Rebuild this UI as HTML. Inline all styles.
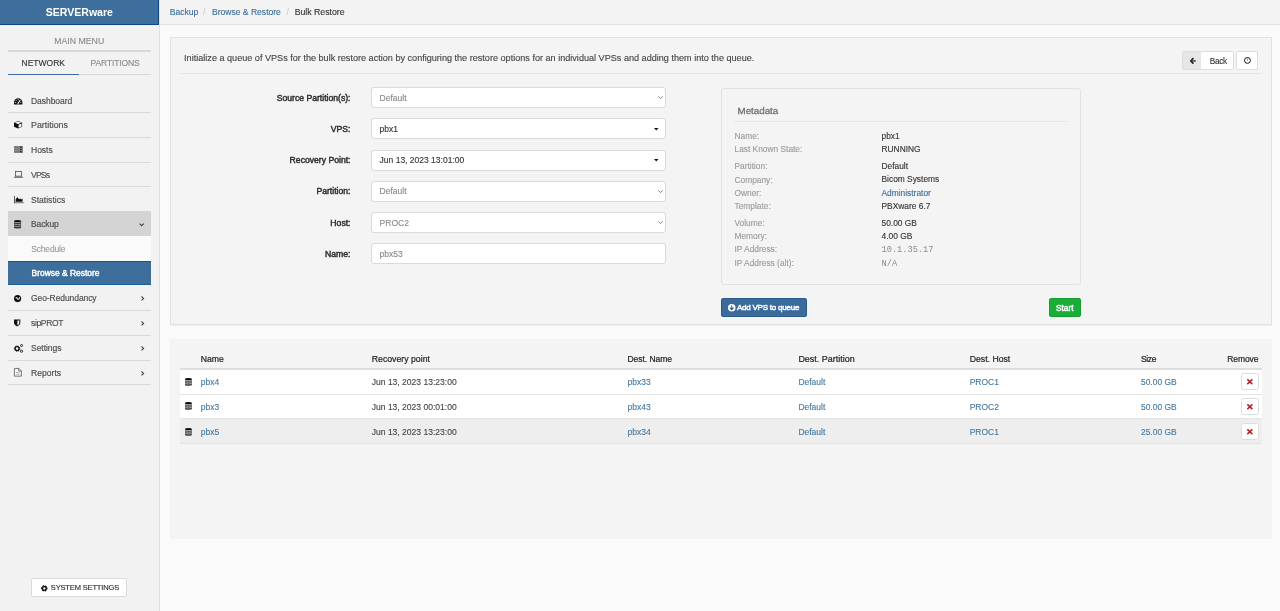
<!DOCTYPE html>
<html><head><meta charset="utf-8"><title>Bulk Restore</title>
<style>
html,body{margin:0;padding:0;}
body{width:1280px;height:611px;overflow:hidden;position:relative;background:#fafafa;font-family:"Liberation Sans",sans-serif;will-change:transform;}
.b{position:absolute;}
.t{position:absolute;line-height:0;white-space:nowrap;font-family:"Liberation Sans",sans-serif;}
</style></head><body>
<div class="b" style="left:0px;top:0px;width:159.00px;height:611.00px;background:#f2f2f2;"></div>
<div class="b" style="left:159px;top:0px;width:1.00px;height:611.00px;background:#e0e0e0;"></div>
<div class="b" style="left:0px;top:0px;width:159.00px;height:24.00px;background:#3e6e9b;"></div>
<div class="b" style="left:0px;top:24px;width:159.00px;height:1.00px;background:#0f4782;"></div>
<div class="b" style="left:158px;top:0px;width:1.00px;height:25.00px;background:#0f4782;"></div>
<div class="t" style="left:-220.7px;width:600px;text-align:center;top:12.34px;font-size:10.57px;color:#fff;font-weight:700;">SERVERware</div>
<div class="t" style="left:-220.8px;width:600px;text-align:center;top:40.57px;font-size:8.74px;color:#8a8a8a;-webkit-text-stroke:0.12px #8a8a8a;">MAIN MENU</div>
<div class="b" style="left:7.5px;top:50.3px;width:143.50px;height:1.50px;background:#d8d8d8;"></div>
<div class="t" style="left:21.5px;top:63.15px;font-size:8.51px;color:#333;-webkit-text-stroke:0.12px #333;">NETWORK</div>
<div class="t" style="left:90.6px;top:63.15px;font-size:8.5px;color:#8a8a8a;-webkit-text-stroke:0.12px #8a8a8a;letter-spacing:-0.125px;">PARTITIONS</div>
<div class="b" style="left:7.5px;top:73.5px;width:71.50px;height:1.70px;background:#3e6e9b;"></div>
<div class="b" style="left:79px;top:73.5px;width:72.00px;height:1.70px;background:#d8d8d8;"></div>
<div class="b" style="left:7.5px;top:112.0px;width:143.50px;height:1.00px;background:#d9d9d9;"></div>
<div class="b" style="left:7.5px;top:136.9px;width:143.50px;height:1.00px;background:#d9d9d9;"></div>
<div class="b" style="left:7.5px;top:161.5px;width:143.50px;height:1.00px;background:#d9d9d9;"></div>
<div class="b" style="left:7.5px;top:186.0px;width:143.50px;height:1.00px;background:#d9d9d9;"></div>
<div class="b" style="left:7.5px;top:310.0px;width:143.50px;height:1.00px;background:#d9d9d9;"></div>
<div class="b" style="left:7.5px;top:335.0px;width:143.50px;height:1.00px;background:#d9d9d9;"></div>
<div class="b" style="left:7.5px;top:359.7px;width:143.50px;height:1.00px;background:#d9d9d9;"></div>
<div class="b" style="left:7.5px;top:384.3px;width:143.50px;height:1.00px;background:#d9d9d9;"></div>
<div class="b" style="left:7.5px;top:211px;width:143.50px;height:25.00px;background:#d4d4d4;"></div>
<div class="b" style="left:7.5px;top:236px;width:143.50px;height:24.60px;background:#fafafa;"></div>
<div class="b" style="left:7.5px;top:260.6px;width:143.50px;height:24.00px;background:#3e6e9b;border-top:1px solid #0f5a98;border-bottom:1px solid #1d5f98;box-sizing:border-box;"></div>
<div class="t" style="left:31px;top:100.65px;font-size:8.5px;color:#4d4d4d;-webkit-text-stroke:0.15px #4d4d4d;letter-spacing:-0.042px;">Dashboard</div>
<div class="t" style="left:31px;top:125.32px;font-size:8.88px;color:#4d4d4d;-webkit-text-stroke:0.15px #4d4d4d;">Partitions</div>
<div class="t" style="left:31px;top:149.80px;font-size:8.51px;color:#4d4d4d;-webkit-text-stroke:0.15px #4d4d4d;">Hosts</div>
<div class="t" style="left:31px;top:174.80px;font-size:8.5px;color:#4d4d4d;-webkit-text-stroke:0.15px #4d4d4d;letter-spacing:-0.753px;">VPSs</div>
<div class="t" style="left:31px;top:199.78px;font-size:8.56px;color:#4d4d4d;-webkit-text-stroke:0.15px #4d4d4d;">Statistics</div>
<div class="t" style="left:31px;top:224.30px;font-size:8.5px;color:#4d4d4d;-webkit-text-stroke:0.15px #4d4d4d;letter-spacing:-0.12px;">Backup</div>
<div class="t" style="left:31px;top:298.30px;font-size:8.5px;color:#4d4d4d;-webkit-text-stroke:0.15px #4d4d4d;letter-spacing:-0.079px;">Geo-Redundancy</div>
<div class="t" style="left:31px;top:323.45px;font-size:8.5px;color:#4d4d4d;-webkit-text-stroke:0.15px #4d4d4d;letter-spacing:-0.346px;">sipPROT</div>
<div class="t" style="left:31px;top:348.05px;font-size:8.5px;color:#4d4d4d;-webkit-text-stroke:0.15px #4d4d4d;letter-spacing:-0.031px;">Settings</div>
<div class="t" style="left:31px;top:373.02px;font-size:8.6px;color:#4d4d4d;-webkit-text-stroke:0.15px #4d4d4d;">Reports</div>
<div class="t" style="left:31.3px;top:248.55px;font-size:8.5px;color:#9a9a9a;-webkit-text-stroke:0.12px #9a9a9a;letter-spacing:-0.192px;">Schedule</div>
<div class="t" style="left:31.5px;top:273.07px;font-size:8.45px;color:#fff;-webkit-text-stroke:0.4px #fff;">Browse &amp; Restore</div>
<div class="b" style="left:31.2px;top:578.2px;width:95.60px;height:18.60px;background:#fff;border:1px solid #dadada;border-radius:2px;box-sizing:border-box;"></div>
<div class="t" style="left:50.8px;top:588.40px;font-size:7.5px;color:#333;-webkit-text-stroke:0.15px #333;letter-spacing:-0.145px;">SYSTEM SETTINGS</div>
<div class="b" style="left:160px;top:0px;width:1120.00px;height:611.00px;background:#fafafa;"></div>
<div class="b" style="left:160px;top:0px;width:1120.00px;height:24.00px;background:#f3f3f3;"></div>
<div class="b" style="left:160px;top:24px;width:1120.00px;height:1.20px;background:#e0e0e0;"></div>
<div class="t" style="left:169.7px;top:11.83px;font-size:8.57px;color:#3c6e9c;-webkit-text-stroke:0.12px #3c6e9c;">Backup</div>
<div class="t" style="left:203px;top:11.85px;font-size:8.5px;color:#d0d0d0;-webkit-text-stroke:0.12px #d0d0d0;">/</div>
<div class="t" style="left:212px;top:11.83px;font-size:8.56px;color:#3c6e9c;-webkit-text-stroke:0.12px #3c6e9c;">Browse &amp; Restore</div>
<div class="t" style="left:286.5px;top:11.85px;font-size:8.5px;color:#d0d0d0;-webkit-text-stroke:0.12px #d0d0d0;">/</div>
<div class="t" style="left:294.7px;top:11.78px;font-size:8.73px;color:#333;-webkit-text-stroke:0.12px #333;">Bulk Restore</div>
<div class="b" style="left:169.5px;top:37px;width:1102.00px;height:287.60px;background:#f4f4f4;border:1px solid #e2e2e2;box-sizing:border-box;box-shadow:0 0.6px 0 #e8e8e8;"></div>
<div class="t" style="left:184.1px;top:58.24px;font-size:9.11px;color:#444;-webkit-text-stroke:0.12px #444;">Initialize a queue of VPSs for the bulk restore action by configuring the restore options for an individual VPSs and adding them into the queue.</div>
<div class="b" style="left:180.4px;top:72.8px;width:1080.60px;height:1.00px;background:#e4e4e4;"></div>
<div class="b" style="left:1182.4px;top:51px;width:52.00px;height:19.00px;background:#fff;border:1px solid #dedede;border-radius:2px;box-sizing:border-box;"></div>
<div class="b" style="left:1183.4px;top:52px;width:17.70px;height:17.00px;background:#e6e6e6;"></div>
<div class="t" style="left:1209.7px;top:60.92px;font-size:8.3px;color:#333;-webkit-text-stroke:0.1px #333;letter-spacing:-0.318px;">Back</div>
<div class="b" style="left:1236.4px;top:51px;width:21.30px;height:19.00px;background:#fff;border:1px solid #dedede;border-radius:2px;box-sizing:border-box;"></div>
<div class="t" style="right:929.5px;top:97.90px;font-size:8.65px;color:#2e2e2e;-webkit-text-stroke:0.45px #2e2e2e;">Source Partition(s):</div>
<div class="b" style="left:371.2px;top:87.1px;width:294.80px;height:21.00px;background:#fff;border:1px solid #dadada;border-radius:3px;box-sizing:border-box;"></div>
<div class="t" style="left:379.6px;top:97.95px;font-size:8.5px;color:#888;-webkit-text-stroke:0.12px #888;">Default</div>
<div class="t" style="right:929.5px;top:129.10px;font-size:8.65px;color:#2e2e2e;-webkit-text-stroke:0.45px #2e2e2e;">VPS:</div>
<div class="b" style="left:371.2px;top:118.3px;width:294.80px;height:21.00px;background:#fff;border:1px solid #dadada;border-radius:3px;box-sizing:border-box;"></div>
<div class="t" style="left:379.6px;top:129.15px;font-size:8.5px;color:#333;-webkit-text-stroke:0.12px #333;">pbx1</div>
<div class="t" style="right:929.5px;top:160.40px;font-size:8.65px;color:#2e2e2e;-webkit-text-stroke:0.45px #2e2e2e;">Recovery Point:</div>
<div class="b" style="left:371.2px;top:149.6px;width:294.80px;height:21.00px;background:#fff;border:1px solid #dadada;border-radius:3px;box-sizing:border-box;"></div>
<div class="t" style="left:379.6px;top:160.45px;font-size:8.5px;color:#333;-webkit-text-stroke:0.12px #333;">Jun 13, 2023 13:01:00</div>
<div class="t" style="right:929.5px;top:191.30px;font-size:8.65px;color:#2e2e2e;-webkit-text-stroke:0.45px #2e2e2e;">Partition:</div>
<div class="b" style="left:371.2px;top:180.5px;width:294.80px;height:21.00px;background:#fff;border:1px solid #dadada;border-radius:3px;box-sizing:border-box;"></div>
<div class="t" style="left:379.6px;top:191.35px;font-size:8.5px;color:#888;-webkit-text-stroke:0.12px #888;">Default</div>
<div class="t" style="right:929.5px;top:222.80px;font-size:8.65px;color:#2e2e2e;-webkit-text-stroke:0.45px #2e2e2e;">Host:</div>
<div class="b" style="left:371.2px;top:212px;width:294.80px;height:21.00px;background:#fff;border:1px solid #dadada;border-radius:3px;box-sizing:border-box;"></div>
<div class="t" style="left:379.6px;top:222.85px;font-size:8.5px;color:#888;-webkit-text-stroke:0.12px #888;">PROC2</div>
<div class="t" style="right:929.5px;top:254.00px;font-size:8.65px;color:#2e2e2e;-webkit-text-stroke:0.45px #2e2e2e;">Name:</div>
<div class="b" style="left:371.2px;top:243.2px;width:294.80px;height:21.00px;background:#fff;border:1px solid #dadada;border-radius:3px;box-sizing:border-box;"></div>
<div class="t" style="left:379.6px;top:254.05px;font-size:8.5px;color:#888;-webkit-text-stroke:0.12px #888;">pbx53</div>
<div class="b" style="left:721px;top:87.6px;width:359.50px;height:197.40px;border:1px solid #e2e2e2;border-radius:3px;box-sizing:border-box;"></div>
<div class="t" style="left:737.5px;top:110.91px;font-size:9.79px;color:#707070;-webkit-text-stroke:0.3px #707070;">Metadata</div>
<div class="b" style="left:734.2px;top:121.4px;width:332.80px;height:1.00px;background:#e6e6e6;"></div>
<div class="t" style="left:734.5px;top:136.00px;font-size:8.37px;color:#9a9a9a;-webkit-text-stroke:0.12px #9a9a9a;">Name:</div>
<div class="t" style="left:881.5px;top:135.99px;font-size:8.4px;color:#333;-webkit-text-stroke:0.12px #333;">pbx1</div>
<div class="t" style="left:734.5px;top:149.10px;font-size:8.37px;color:#9a9a9a;-webkit-text-stroke:0.12px #9a9a9a;">Last Known State:</div>
<div class="t" style="left:881.5px;top:149.09px;font-size:8.4px;color:#333;-webkit-text-stroke:0.12px #333;">RUNNING</div>
<div class="t" style="left:734.5px;top:166.10px;font-size:8.37px;color:#9a9a9a;-webkit-text-stroke:0.12px #9a9a9a;">Partition:</div>
<div class="t" style="left:881.5px;top:166.09px;font-size:8.4px;color:#333;-webkit-text-stroke:0.12px #333;">Default</div>
<div class="t" style="left:734.5px;top:179.50px;font-size:8.37px;color:#9a9a9a;-webkit-text-stroke:0.12px #9a9a9a;">Company:</div>
<div class="t" style="left:881.5px;top:179.49px;font-size:8.4px;color:#333;-webkit-text-stroke:0.12px #333;">Bicom Systems</div>
<div class="t" style="left:734.5px;top:193.10px;font-size:8.37px;color:#9a9a9a;-webkit-text-stroke:0.12px #9a9a9a;">Owner:</div>
<div class="t" style="left:881.5px;top:193.09px;font-size:8.4px;color:#3c6e9c;-webkit-text-stroke:0.12px #3c6e9c;">Administrator</div>
<div class="t" style="left:734.5px;top:206.10px;font-size:8.37px;color:#9a9a9a;-webkit-text-stroke:0.12px #9a9a9a;">Template:</div>
<div class="t" style="left:881.5px;top:206.09px;font-size:8.4px;color:#333;-webkit-text-stroke:0.12px #333;">PBXware 6.7</div>
<div class="t" style="left:734.5px;top:222.70px;font-size:8.37px;color:#9a9a9a;-webkit-text-stroke:0.12px #9a9a9a;">Volume:</div>
<div class="t" style="left:881.5px;top:222.69px;font-size:8.4px;color:#333;-webkit-text-stroke:0.12px #333;">50.00 GB</div>
<div class="t" style="left:734.5px;top:236.30px;font-size:8.37px;color:#9a9a9a;-webkit-text-stroke:0.12px #9a9a9a;">Memory:</div>
<div class="t" style="left:881.5px;top:236.29px;font-size:8.4px;color:#333;-webkit-text-stroke:0.12px #333;">4.00 GB</div>
<div class="t" style="left:734.5px;top:249.40px;font-size:8.37px;color:#9a9a9a;-webkit-text-stroke:0.12px #9a9a9a;">IP Address:</div>
<div class="t" style="left:881.5px;top:249.99px;font-size:8.67px;color:#8c8c8c;font-family:'Liberation Mono',monospace;">10.1.35.17</div>
<div class="t" style="left:734.5px;top:263.30px;font-size:8.37px;color:#9a9a9a;-webkit-text-stroke:0.12px #9a9a9a;">IP Address (alt):</div>
<div class="t" style="left:881.5px;top:263.89px;font-size:8.67px;color:#8c8c8c;font-family:'Liberation Mono',monospace;">N/A</div>
<div class="b" style="left:721px;top:298.4px;width:86.00px;height:18.20px;background:#3b6b9a;border:1px solid #2a5d8e;border-radius:2px;box-sizing:border-box;"></div>
<div class="t" style="left:736.9px;top:307.73px;font-size:8.0px;color:#fff;-webkit-text-stroke:0.45px #fff;letter-spacing:-0.222px;">Add VPS to queue</div>
<div class="b" style="left:1049px;top:298.4px;width:32.00px;height:18.20px;background:#1aae39;border:1px solid #15a032;border-radius:2px;box-sizing:border-box;"></div>
<div class="t" style="left:1056px;top:307.53px;font-size:8.29px;color:#fff;-webkit-text-stroke:0.45px #fff;">Start</div>
<div class="b" style="left:169.5px;top:338.8px;width:1102.00px;height:200.00px;background:#f4f4f4;"></div>
<div class="t" style="left:200.8px;top:358.60px;font-size:8.66px;color:#222;-webkit-text-stroke:0.2px #222;">Name</div>
<div class="t" style="left:371.75px;top:358.58px;font-size:8.73px;color:#222;-webkit-text-stroke:0.2px #222;">Recovery point</div>
<div class="t" style="left:627.5px;top:358.65px;font-size:8.5px;color:#222;-webkit-text-stroke:0.2px #222;letter-spacing:-0.042px;">Dest. Name</div>
<div class="t" style="left:798.4px;top:358.50px;font-size:8.96px;color:#222;-webkit-text-stroke:0.2px #222;">Dest. Partition</div>
<div class="t" style="left:969.7px;top:358.59px;font-size:8.7px;color:#222;-webkit-text-stroke:0.2px #222;">Dest. Host</div>
<div class="t" style="left:1141px;top:358.65px;font-size:8.5px;color:#222;-webkit-text-stroke:0.2px #222;letter-spacing:-0.345px;">Size</div>
<div class="t" style="right:21.59999999999991px;top:358.65px;font-size:8.5px;color:#222;-webkit-text-stroke:0.2px #222;letter-spacing:-0.09px;">Remove</div>
<div class="b" style="left:179.6px;top:368px;width:1082.40px;height:1.80px;background:#dedede;"></div>
<div class="b" style="left:179.6px;top:369.8px;width:1082.40px;height:24.20px;background:#fff;"></div>
<div class="b" style="left:179.6px;top:394px;width:1082.40px;height:24.40px;background:#fff;"></div>
<div class="b" style="left:179.6px;top:418.4px;width:1082.40px;height:25.20px;background:#eeeeee;"></div>
<div class="b" style="left:179.6px;top:393.5px;width:1082.40px;height:1.10px;background:#e4e4e4;"></div>
<div class="b" style="left:179.6px;top:417.9px;width:1082.40px;height:1.10px;background:#e4e4e4;"></div>
<div class="b" style="left:179.6px;top:443.1px;width:1082.40px;height:1.10px;background:#e4e4e4;"></div>
<div class="t" style="left:200.8px;top:382.05px;font-size:8.5px;color:#4579a0;-webkit-text-stroke:0.12px #4579a0;">pbx4</div>
<div class="t" style="left:371.75px;top:382.04px;font-size:8.54px;color:#444;-webkit-text-stroke:0.12px #444;">Jun 13, 2023 13:23:00</div>
<div class="t" style="left:627.5px;top:382.05px;font-size:8.5px;color:#4579a0;-webkit-text-stroke:0.12px #4579a0;">pbx33</div>
<div class="t" style="left:798.4px;top:382.05px;font-size:8.5px;color:#4579a0;-webkit-text-stroke:0.12px #4579a0;">Default</div>
<div class="t" style="left:969.7px;top:382.05px;font-size:8.5px;color:#4579a0;-webkit-text-stroke:0.12px #4579a0;">PROC1</div>
<div class="t" style="left:1141px;top:382.08px;font-size:8.43px;color:#4579a0;-webkit-text-stroke:0.12px #4579a0;">50.00 GB</div>
<div class="b" style="left:1240.6px;top:373.1px;width:18.00px;height:17.30px;background:#fff;border:1px solid #dcdcdc;border-radius:2.5px;box-sizing:border-box;"></div>
<div class="t" style="left:200.8px;top:406.55px;font-size:8.5px;color:#4579a0;-webkit-text-stroke:0.12px #4579a0;">pbx3</div>
<div class="t" style="left:371.75px;top:406.54px;font-size:8.54px;color:#444;-webkit-text-stroke:0.12px #444;">Jun 13, 2023 00:01:00</div>
<div class="t" style="left:627.5px;top:406.55px;font-size:8.5px;color:#4579a0;-webkit-text-stroke:0.12px #4579a0;">pbx43</div>
<div class="t" style="left:798.4px;top:406.55px;font-size:8.5px;color:#4579a0;-webkit-text-stroke:0.12px #4579a0;">Default</div>
<div class="t" style="left:969.7px;top:406.55px;font-size:8.5px;color:#4579a0;-webkit-text-stroke:0.12px #4579a0;">PROC2</div>
<div class="t" style="left:1141px;top:406.58px;font-size:8.43px;color:#4579a0;-webkit-text-stroke:0.12px #4579a0;">50.00 GB</div>
<div class="b" style="left:1240.6px;top:397.6px;width:18.00px;height:17.30px;background:#fff;border:1px solid #dcdcdc;border-radius:2.5px;box-sizing:border-box;"></div>
<div class="t" style="left:200.8px;top:432.05px;font-size:8.5px;color:#4579a0;-webkit-text-stroke:0.12px #4579a0;">pbx5</div>
<div class="t" style="left:371.75px;top:432.04px;font-size:8.54px;color:#444;-webkit-text-stroke:0.12px #444;">Jun 13, 2023 13:23:00</div>
<div class="t" style="left:627.5px;top:432.05px;font-size:8.5px;color:#4579a0;-webkit-text-stroke:0.12px #4579a0;">pbx34</div>
<div class="t" style="left:798.4px;top:432.05px;font-size:8.5px;color:#4579a0;-webkit-text-stroke:0.12px #4579a0;">Default</div>
<div class="t" style="left:969.7px;top:432.05px;font-size:8.5px;color:#4579a0;-webkit-text-stroke:0.12px #4579a0;">PROC1</div>
<div class="t" style="left:1141px;top:432.08px;font-size:8.43px;color:#4579a0;-webkit-text-stroke:0.12px #4579a0;">25.00 GB</div>
<div class="b" style="left:1240.6px;top:423.1px;width:18.00px;height:17.30px;background:#fff;border:1px solid #dcdcdc;border-radius:2.5px;box-sizing:border-box;"></div>
<svg class="b" style="left:14px;top:97.6px;overflow:visible" width="8.4" height="6.5" viewBox="0 0 8.4 6.5"><path d="M0,6.5 L0,4.4 A4.2,4.2 0 0 1 8.4,4.4 L8.4,6.5 Z" fill="#111"/><path d="M3.9,5.6 L6.1,2.3" stroke="#f2f2f2" stroke-width="1.1" stroke-linecap="round"/><circle cx="1.5" cy="4.3" r="0.55" fill="#f2f2f2"/><circle cx="4.2" cy="1.3" r="0.55" fill="#f2f2f2"/><circle cx="2.2" cy="2.3" r="0.5" fill="#f2f2f2"/><circle cx="6.9" cy="4.3" r="0.5" fill="#f2f2f2"/></svg>
<svg class="b" style="left:14px;top:121.1px;overflow:visible" width="8.1" height="7.5" viewBox="0 0 8.1 7.5"><path d="M4.05,0 L8.1,1.75 L8.1,5.75 L4.05,7.5 L0,5.75 L0,1.75 Z" fill="#111"/><path d="M4.05,0.6 L7.3,1.85 L4.05,3.1 L0.8,1.85 Z" fill="#fff"/><path d="M4.6,3.65 L7.5,2.45 L7.5,5.45 L4.6,6.8 Z" fill="#fff"/></svg>
<svg class="b" style="left:14px;top:146px;overflow:visible" width="8.9" height="6.9" viewBox="0 0 8.9 6.9"><rect x="0" y="0" width="8.9" height="6.9" fill="#7a7a7a"/><path d="M0,2.3 H8.9 M0,4.6 H8.9" stroke="#a8a8a8" stroke-width="0.4"/><circle cx="6.9" cy="1.15" r="0.75" fill="#111"/><circle cx="6.9" cy="3.45" r="0.75" fill="#111"/><circle cx="6.9" cy="5.75" r="0.75" fill="#111"/></svg>
<svg class="b" style="left:14px;top:171.2px;overflow:visible" width="9" height="6.7" viewBox="0 0 9 6.7"><rect x="1.5" y="0.45" width="6" height="4.7" fill="none" stroke="#444" stroke-width="0.75"/><rect x="0" y="5.75" width="9" height="0.9" fill="#444"/></svg>
<svg class="b" style="left:14px;top:195.9px;overflow:visible" width="9.8" height="7.2" viewBox="0 0 9.8 7.2"><rect x="0" y="0" width="0.8" height="7.2" fill="#333"/><rect x="0" y="6.4" width="9.8" height="0.8" fill="#555"/><path d="M1.6,5.8 L1.6,3.4 L3.3,0.9 L5,3.3 L6.2,2.4 L7.3,3.6 L8.6,2.6 L8.6,5.8 Z" fill="#111"/></svg>
<svg class="b" style="left:14px;top:219.7px;overflow:visible" width="7.1" height="8.5" viewBox="0 0 7.1 8.5"><rect x="0" y="0" width="7.1" height="8.5" rx="2.13" ry="1.3" fill="#3a3a3a"/><path d="M0.2,2.2 Q3.55,3.0 6.8999999999999995,2.2" fill="none" stroke="#d4d4d4" stroke-width="0.6"/><path d="M0.1,4.25 Q3.55,4.95 7.0,4.25" fill="none" stroke="#d4d4d4" stroke-width="0.55"/><path d="M0.1,6.10 Q3.55,6.80 7.0,6.10" fill="none" stroke="#d4d4d4" stroke-width="0.55"/><path d="M0.6,0.9 Q3.55,0.1 6.5,0.9 L6.5,1.7 Q3.55,2.5 0.6,1.7 Z" fill="#000"/></svg>
<svg class="b" style="left:14px;top:294.5px;overflow:visible" width="7.2" height="7.2" viewBox="0 0 7.2 7.2"><circle cx="3.6" cy="3.6" r="3.6" fill="#111"/><path d="M1.9,1.9 L3.4,2.6 L4.1,4.0 L5.9,1.7 L6.3,2.6 L5.2,4.6 L3.9,5.0 L2.7,3.4 L1.4,2.9 Z" fill="#f2f2f2"/></svg>
<svg class="b" style="left:14px;top:319.2px;overflow:visible" width="6.3" height="7.4" viewBox="0 0 6.3 7.4"><path d="M0,0.4 L6.3,0.4 L6.3,3.8 C6.3,5.8 4.6,6.9 3.15,7.4 C1.7,6.9 0,5.8 0,3.8 Z" fill="#111"/><path d="M3.4,1.4 L5.3,1.4 L5.3,3.8 C5.3,5.1 4.4,6 3.4,6.3 Z" fill="#f2f2f2"/></svg>
<svg class="b" style="left:14px;top:343.8px;overflow:visible" width="8.8" height="8.5" viewBox="0 0 8.8 8.5"><circle cx="3.1" cy="4.6" r="2.0" fill="none" stroke="#111" stroke-width="1.4"/><circle cx="3.1" cy="4.6" r="2.75" fill="none" stroke="#111" stroke-width="0.9" stroke-dasharray="1.080 1.080"/><circle cx="7.55" cy="1.5" r="1.0" fill="none" stroke="#111" stroke-width="0.9"/><circle cx="7.5" cy="7.2" r="1.15" fill="none" stroke="#111" stroke-width="0.85"/></svg>
<svg class="b" style="left:14px;top:368px;overflow:visible" width="7.8" height="8.6" viewBox="0 0 7.8 8.6"><path d="M0.45,0.45 L4.9,0.45 L7.35,2.9 L7.35,8.15 L0.45,8.15 Z" fill="#fff" fill-opacity="0.5" stroke="#555" stroke-width="0.8"/><path d="M4.7,0.6 L4.7,3.1 L7.2,3.1" fill="none" stroke="#555" stroke-width="0.75"/><path d="M2.1,4.6 H5.6 M2.1,6.2 H5.6" stroke="#888" stroke-width="0.6"/></svg>
<svg class="b" style="left:138.8px;top:222.6px;overflow:visible" width="5.4" height="3.4" viewBox="0 0 5.4 3.4"><path d="M0.55,0.55 L2.7,2.75 L4.85,0.55" fill="none" stroke="#444" stroke-width="1.1"/></svg>
<svg class="b" style="left:140.9px;top:296.0px;overflow:visible" width="3.2" height="4.8" viewBox="0 0 3.2 4.8"><path d="M0.5,0.5 L2.6,2.4 L0.5,4.3" fill="none" stroke="#444" stroke-width="1.1"/></svg>
<svg class="b" style="left:140.9px;top:320.90000000000003px;overflow:visible" width="3.2" height="4.8" viewBox="0 0 3.2 4.8"><path d="M0.5,0.5 L2.6,2.4 L0.5,4.3" fill="none" stroke="#444" stroke-width="1.1"/></svg>
<svg class="b" style="left:140.9px;top:345.8px;overflow:visible" width="3.2" height="4.8" viewBox="0 0 3.2 4.8"><path d="M0.5,0.5 L2.6,2.4 L0.5,4.3" fill="none" stroke="#444" stroke-width="1.1"/></svg>
<svg class="b" style="left:140.9px;top:370.6px;overflow:visible" width="3.2" height="4.8" viewBox="0 0 3.2 4.8"><path d="M0.5,0.5 L2.6,2.4 L0.5,4.3" fill="none" stroke="#444" stroke-width="1.1"/></svg>
<svg class="b" style="left:40.7px;top:584.6px;overflow:visible" width="6.6" height="6.6" viewBox="0 0 6.6 6.6"><circle cx="3.3" cy="3.4" r="1.95" fill="none" stroke="#111" stroke-width="1.5"/><circle cx="3.3" cy="3.4" r="2.85" fill="none" stroke="#111" stroke-width="0.9" stroke-dasharray="1.492 1.492" transform="rotate(-15 3.3 3.4)"/></svg>
<svg class="b" style="left:1189.6px;top:57.9px;overflow:visible" width="6" height="5.9" viewBox="0 0 6 5.9"><path d="M3.0,0.6 L0.75,2.95 L3.0,5.3" fill="none" stroke="#111" stroke-width="1.5" stroke-linecap="round" stroke-linejoin="round"/><path d="M1,2.95 H5.8" stroke="#333" stroke-width="1.4"/></svg>
<svg class="b" style="left:1243.9px;top:57.1px;overflow:visible" width="6.9" height="6.9" viewBox="0 0 6.9 6.9"><circle cx="3.45" cy="3.45" r="2.95" fill="none" stroke="#111" stroke-width="1"/><path d="M3.45,1.6 V3.6" stroke="#555" stroke-width="0.7"/></svg>
<svg class="b" style="left:727.9px;top:303.6px;overflow:visible" width="7.5" height="7.5" viewBox="0 0 7.5 7.5"><circle cx="3.75" cy="3.75" r="3.75" fill="#fff"/><path d="M3.75,1.4 V5.4 M1.9,3.7 L3.75,5.6 L5.6,3.7" fill="none" stroke="#2b5f92" stroke-width="1.1"/></svg>
<svg class="b" style="left:658.2px;top:96.19999999999999px;overflow:visible" width="4.9" height="3" viewBox="0 0 4.9 3"><path d="M0.3,0.3 L2.45,2.6 L4.6,0.3" fill="none" stroke="#666" stroke-width="0.8"/></svg>
<svg class="b" style="left:654px;top:127.8px;overflow:visible" width="4.5" height="2.4" viewBox="0 0 4.5 2.4"><path d="M0,0 H4.5 L2.25,2.4 Z" fill="#111"/></svg>
<svg class="b" style="left:654px;top:159.1px;overflow:visible" width="4.5" height="2.4" viewBox="0 0 4.5 2.4"><path d="M0,0 H4.5 L2.25,2.4 Z" fill="#111"/></svg>
<svg class="b" style="left:658.2px;top:189.6px;overflow:visible" width="4.9" height="3" viewBox="0 0 4.9 3"><path d="M0.3,0.3 L2.45,2.6 L4.6,0.3" fill="none" stroke="#666" stroke-width="0.8"/></svg>
<svg class="b" style="left:658.2px;top:221.1px;overflow:visible" width="4.9" height="3" viewBox="0 0 4.9 3"><path d="M0.3,0.3 L2.45,2.6 L4.6,0.3" fill="none" stroke="#666" stroke-width="0.8"/></svg>
<svg class="b" style="left:185.1px;top:377.9px;overflow:visible" width="6.9" height="7.8" viewBox="0 0 6.9 7.8"><rect x="0" y="0" width="6.9" height="7.8" rx="2.07" ry="1.3" fill="#3a3a3a"/><path d="M0.2,2.2 Q3.45,3.0 6.7,2.2" fill="none" stroke="#fff" stroke-width="0.6"/><path d="M0.1,3.90 Q3.45,4.60 6.800000000000001,3.90" fill="none" stroke="#fff" stroke-width="0.55"/><path d="M0.1,5.60 Q3.45,6.30 6.800000000000001,5.60" fill="none" stroke="#fff" stroke-width="0.55"/><path d="M0.6,0.9 Q3.45,0.1 6.300000000000001,0.9 L6.300000000000001,1.7 Q3.45,2.5 0.6,1.7 Z" fill="#000"/></svg>
<svg class="b" style="left:1246.6px;top:379.4px;overflow:visible" width="5.7" height="5.5" viewBox="0 0 5.7 5.5"><path d="M0.9,0.9 L4.8,4.6 M4.8,0.9 L0.9,4.6" stroke="#b3242a" stroke-width="1.6" stroke-linecap="square"/></svg>
<svg class="b" style="left:185.1px;top:402.4px;overflow:visible" width="6.9" height="7.8" viewBox="0 0 6.9 7.8"><rect x="0" y="0" width="6.9" height="7.8" rx="2.07" ry="1.3" fill="#3a3a3a"/><path d="M0.2,2.2 Q3.45,3.0 6.7,2.2" fill="none" stroke="#fff" stroke-width="0.6"/><path d="M0.1,3.90 Q3.45,4.60 6.800000000000001,3.90" fill="none" stroke="#fff" stroke-width="0.55"/><path d="M0.1,5.60 Q3.45,6.30 6.800000000000001,5.60" fill="none" stroke="#fff" stroke-width="0.55"/><path d="M0.6,0.9 Q3.45,0.1 6.300000000000001,0.9 L6.300000000000001,1.7 Q3.45,2.5 0.6,1.7 Z" fill="#000"/></svg>
<svg class="b" style="left:1246.6px;top:403.9px;overflow:visible" width="5.7" height="5.5" viewBox="0 0 5.7 5.5"><path d="M0.9,0.9 L4.8,4.6 M4.8,0.9 L0.9,4.6" stroke="#b3242a" stroke-width="1.6" stroke-linecap="square"/></svg>
<svg class="b" style="left:185.1px;top:427.9px;overflow:visible" width="6.9" height="7.8" viewBox="0 0 6.9 7.8"><rect x="0" y="0" width="6.9" height="7.8" rx="2.07" ry="1.3" fill="#3a3a3a"/><path d="M0.2,2.2 Q3.45,3.0 6.7,2.2" fill="none" stroke="#fff" stroke-width="0.6"/><path d="M0.1,3.90 Q3.45,4.60 6.800000000000001,3.90" fill="none" stroke="#fff" stroke-width="0.55"/><path d="M0.1,5.60 Q3.45,6.30 6.800000000000001,5.60" fill="none" stroke="#fff" stroke-width="0.55"/><path d="M0.6,0.9 Q3.45,0.1 6.300000000000001,0.9 L6.300000000000001,1.7 Q3.45,2.5 0.6,1.7 Z" fill="#000"/></svg>
<svg class="b" style="left:1246.6px;top:429.4px;overflow:visible" width="5.7" height="5.5" viewBox="0 0 5.7 5.5"><path d="M0.9,0.9 L4.8,4.6 M4.8,0.9 L0.9,4.6" stroke="#b3242a" stroke-width="1.6" stroke-linecap="square"/></svg>
</body></html>
